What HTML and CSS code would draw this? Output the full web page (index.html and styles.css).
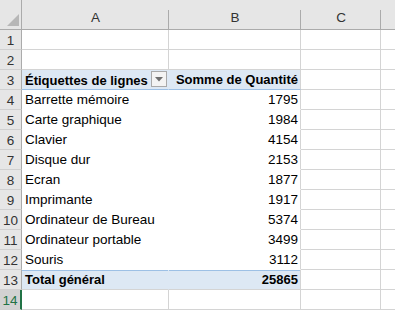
FILE: index.html
```html
<!DOCTYPE html>
<html lang="fr">
  <head>
    <meta charset="UTF-8" />
    <title>Tableau croisé</title>
    <link rel="stylesheet" href="styles.css">
  </head>
  <body>
    <div class="sheet">
      <div class="corner">
        <svg width="12" height="12" viewBox="0 0 12 12"><polygon points="12,0 12,12 0,12" fill="#b7b7b7"/></svg>
      </div>
      <div class="colhead">A</div>
      <div class="colhead">B</div>
      <div class="colhead">C</div>
      <div class="colhead last"></div>

      <div class="rowhead">1</div><div class="cell"></div><div class="cell"></div><div class="cell"></div><div class="cell last"></div>
      <div class="rowhead">2</div><div class="cell"></div><div class="cell"></div><div class="cell"></div><div class="cell last"></div>

      <div class="rowhead">3</div>
      <div class="cell pv head label">
        <span>Étiquettes de lignes</span>
        <span class="filter"><svg width="8" height="5" viewBox="0 0 8 5"><polygon points="0,0 8,0 4,4.5" fill="#6f6f6f"/></svg></span>
      </div>
      <div class="cell pv head num">Somme de Quantité</div>
      <div class="cell"></div><div class="cell last"></div>

      <div class="rowhead">4</div><div class="cell pv">Barrette mémoire</div><div class="cell pv num">1795</div><div class="cell"></div><div class="cell last"></div>
      <div class="rowhead">5</div><div class="cell pv">Carte graphique</div><div class="cell pv num">1984</div><div class="cell"></div><div class="cell last"></div>
      <div class="rowhead">6</div><div class="cell pv">Clavier</div><div class="cell pv num">4154</div><div class="cell"></div><div class="cell last"></div>
      <div class="rowhead">7</div><div class="cell pv">Disque dur</div><div class="cell pv num">2153</div><div class="cell"></div><div class="cell last"></div>
      <div class="rowhead">8</div><div class="cell pv">Ecran</div><div class="cell pv num">1877</div><div class="cell"></div><div class="cell last"></div>
      <div class="rowhead">9</div><div class="cell pv">Imprimante</div><div class="cell pv num">1917</div><div class="cell"></div><div class="cell last"></div>
      <div class="rowhead">10</div><div class="cell pv">Ordinateur de Bureau</div><div class="cell pv num">5374</div><div class="cell"></div><div class="cell last"></div>
      <div class="rowhead">11</div><div class="cell pv">Ordinateur portable</div><div class="cell pv num">3499</div><div class="cell"></div><div class="cell last"></div>
      <div class="rowhead">12</div><div class="cell pv">Souris</div><div class="cell pv num">3112</div><div class="cell"></div><div class="cell last"></div>

      <div class="rowhead">13</div>
      <div class="cell pv total">Total général</div>
      <div class="cell pv total num">25865</div>
      <div class="cell"></div><div class="cell last"></div>

      <div class="rowhead active">14</div><div class="cell"></div><div class="cell"></div><div class="cell"></div><div class="cell last"></div>
    </div>
  </body>
</html>
```

FILE: styles.css
```css
* {
  margin: 0;
  padding: 0;
  box-sizing: border-box;
}
body {
  background: #fff;
  font-family: "Liberation Sans", Arial, sans-serif;
  font-size: 13.5px;
  color: #000;
}
.sheet {
  display: grid;
  grid-template-columns: 22px 147px 132px 80px 1fr;
  grid-template-rows: 30px;
  grid-auto-rows: 20px;
  width: 395px;
}
.corner {
  background: #e6e6e6;
  border-right: 1px solid #ababab;
  border-bottom: 1px solid #ababab;
  display: flex;
  align-items: flex-end;
  justify-content: flex-end;
  padding: 0 2px 3px 0;
}
.colhead {
  background:
    linear-gradient(#ababab, #ababab) right bottom / 1px 19px no-repeat,
    #e6e6e6;
  border-bottom: 1px solid #ababab;
  color: #333;
  display: flex;
  align-items: flex-end;
  justify-content: center;
  padding-bottom: 4px;
}
.colhead.last {
  background: #e6e6e6;
}
.rowhead {
  background: #e6e6e6;
  border-right: 1px solid #ababab;
  border-bottom: 1px solid #d0d0d0;
  color: #333;
  display: flex;
  align-items: flex-end;
  justify-content: center;
  padding-bottom: 1px;
}
.rowhead.active {
  background: #d2d2d2;
  color: #217346;
  border-right: 2px solid #217346;
}
.cell {
  border-right: 1px solid #d4d4d4;
  border-bottom: 1px solid #d4d4d4;
  display: flex;
  align-items: flex-end;
  padding: 0 3px 2px 3px;
  white-space: nowrap;
}
.cell.last {
  border-right: none;
}
.cell.pv {
  background: #fff;
  border-bottom-color: #fff;
}
.cell.pv:not(.num) {
  border-right-color: #fff;
}
.cell.num {
  justify-content: flex-end;
  padding-right: 2px;
}
.cell.head {
  background: #dde8f4;
  font-weight: 700;
  font-size: 13px;
  border-bottom-color: #9dc0e5;
}
.cell.head:not(.num) {
  border-right-color: #dde8f4;
}
.cell.label {
  justify-content: space-between;
  padding-right: 1px;
  padding-bottom: 1px;
}
.filter {
  width: 16px;
  height: 16px;
  background: #f3f3f3;
  border: 1px solid #a9a9a9;
  display: flex;
  align-items: center;
  justify-content: center;
  margin-bottom: 1px;
}
.cell.total {
  background: #dde8f4;
  font-weight: 700;
  font-size: 13px;
  border-bottom-color: #d4d4d4;
  box-shadow: inset 0 1px 0 #9dc0e5;
}
.cell.total:not(.num) {
  border-right-color: #dde8f4;
}
```
